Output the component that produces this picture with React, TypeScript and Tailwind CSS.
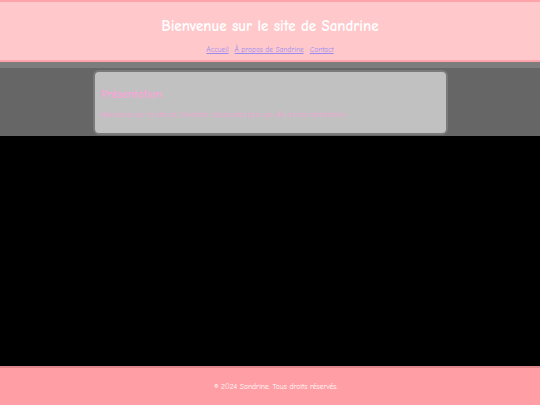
export default function App() {
  const font = { fontFamily: '"Comic Sans MS", "Comic Neue", cursive' };
  return (
    <div className="w-[540px] h-[405px] flex flex-col bg-black overflow-hidden" style={font}>
      <header className="h-[62px] shrink-0 bg-[#ffc9cc] border-t-[2px] border-b-[2px] border-[#ffa3aa] flex flex-col items-center">
        <h1 className="mt-[15px] text-[15px] leading-[18px] text-white font-bold">Bienvenue sur le site de Sandrine</h1>
        <nav className="mt-[10px] flex gap-[6px] text-[7.4px] leading-[9px]">
          <a className="text-[#9a8cf0] underline">Accueil</a>
          <a className="text-[#9a8cf0] underline">À propos de Sandrine</a>
          <a className="text-[#9a8cf0] underline">Contact</a>
        </nav>
      </header>
      <main className="h-[74px] shrink-0 bg-[#666666] border-t-[6px] border-[#7d7d7d] flex justify-center">
        <section className="w-[355px] h-[65px] mt-[2px] bg-[#c1c1c1] border-[2px] border-[#7a7a7a] rounded-[6px] px-[6px]">
          <h2 className="mt-[16px] text-[11.5px] leading-[14px] font-bold text-[#f7a6d8]">Présentation</h2>
          <p className="mt-[8px] text-[7.5px] leading-[9px] text-[#f2a5d5]">
            Bienvenue sur le site de Sandrine. Découvrez plus sur elle et ses réalisations.
          </p>
        </section>
      </main>
      <div className="flex-1 bg-black" />
      <footer className="h-[39px] shrink-0 bg-[#ff9ea4] border-t-[2px] border-[#e0868d] flex items-center justify-center pl-[12px]">
        <p className="text-[7.6px] leading-[9px] text-white">© 2024 Sandrine. Tous droits réservés.</p>
      </footer>
    </div>
  );
}
